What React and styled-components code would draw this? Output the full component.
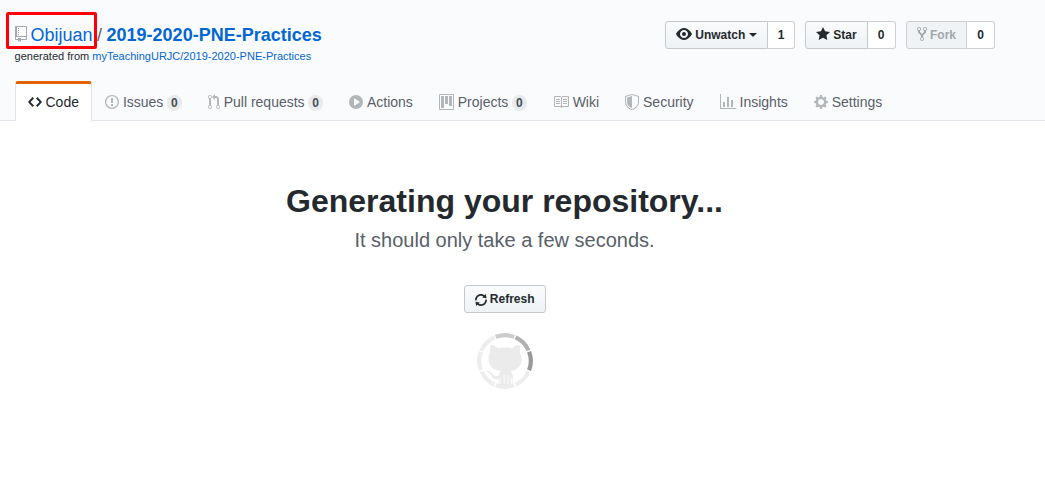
import React from "react";
import styled, { createGlobalStyle } from "styled-components";

const GlobalStyle = createGlobalStyle`
  * { box-sizing: border-box; }
  body {
    margin: 0;
    background: #fff;
    color: #24292e;
    font: 14px/1.5 "Liberation Sans", Arial, sans-serif;
  }
`;

const ICONS = {
  repo: [12, "M4 9H3V8h1v1zm0-3H3v1h1V6zm0-2H3v1h1V4zm0-2H3v1h1V2zm8-1v12c0 .55-.45 1-1 1H6v2l-1.5-1.5L3 16v-2H1c-.55 0-1-.45-1-1V1c0-.55.45-1 1-1h10c.55 0 1 .45 1 1zm-1 10H1v2h2v-1h3v1h5v-2zm0-10H2v9h9V1z"],
  eye: [16, "M8.06 2C3 2 0 8 0 8s3 6 8.06 6C13 14 16 8 16 8s-3-6-7.94-6zM8 12c-2.2 0-4-1.78-4-4 0-2.2 1.8-4 4-4 2.22 0 4 1.8 4 4 0 2.22-1.78 4-4 4zm2-4c0 1.11-.89 2-2 2-1.11 0-2-.89-2-2 0-1.11.89-2 2-2 1.11 0 2 .89 2 2z"],
  star: [14, "M14 6l-4.9-.64L7 1 4.9 5.36 0 6l3.6 3.26L2.67 14 7 11.67 11.33 14l-.93-4.74L14 6z"],
  fork: [10, "M8 1a1.993 1.993 0 0 0-1 3.72V6L5 8 3 6V4.72A1.993 1.993 0 0 0 2 1a1.993 1.993 0 0 0-1 3.72V6.5l3 3v1.78A1.993 1.993 0 0 0 5 15a1.993 1.993 0 0 0 1-3.72V9.5l3-3V4.72A1.993 1.993 0 0 0 8 1zM2 4.2C1.34 4.2.8 3.65.8 3c0-.65.55-1.2 1.2-1.2.65 0 1.2.55 1.2 1.2 0 .65-.55 1.2-1.2 1.2zm3 10c-.66 0-1.2-.55-1.2-1.2 0-.65.55-1.2 1.2-1.2.65 0 1.2.55 1.2 1.2 0 .65-.55 1.2-1.2 1.2zm3-10c-.66 0-1.2-.55-1.2-1.2 0-.65.55-1.2 1.2-1.2.65 0 1.2.55 1.2 1.2 0 .65-.55 1.2-1.2 1.2z"],
  code: [14, "M9.5 3L8 4.5 11.5 8 8 11.5 9.5 13 14 8 9.5 3zm-5 0L0 8l4.5 5L6 11.5 2.5 8 6 4.5 4.5 3z"],
  issue: [14, "M7 2.3c3.14 0 5.7 2.56 5.7 5.7s-2.56 5.7-5.7 5.7A5.71 5.71 0 0 1 1.3 8c0-3.14 2.56-5.7 5.7-5.7zM7 1C3.14 1 0 4.14 0 8s3.14 7 7 7 7-3.14 7-7-3.14-7-7-7zm1 3H6v5h2V4zm0 6H6v2h2v-2z"],
  pull: [12, "M11 11.28V5c-.03-.78-.34-1.47-.94-2.06C9.46 2.35 8.78 2.03 8 2H7V0L4 3l3 3V4h1c.27.02.48.11.69.31.21.2.3.42.31.69v6.28A1.993 1.993 0 0 0 10 15a1.993 1.993 0 0 0 1-3.72zm-1 2.92c-.66 0-1.2-.55-1.2-1.2 0-.65.55-1.2 1.2-1.2.65 0 1.2.55 1.2 1.2 0 .65-.55 1.2-1.2 1.2zM4 3c0-1.11-.89-2-2-2a1.993 1.993 0 0 0-1 3.72v6.56A1.993 1.993 0 0 0 2 15a1.993 1.993 0 0 0 1-3.72V4.72c.59-.34 1-.98 1-1.72zm-.8 10c0 .66-.55 1.2-1.2 1.2-.65 0-1.2-.55-1.2-1.2 0-.65.55-1.2 1.2-1.2.65 0 1.2.55 1.2 1.2zM2 4.2C1.34 4.2.8 3.65.8 3c0-.65.55-1.2 1.2-1.2.65 0 1.2.55 1.2 1.2 0 .65-.55 1.2-1.2 1.2z"],
  play: [14, "M14 8A7 7 0 1 1 0 8a7 7 0 0 1 14 0zm-8.223 3.482l4.599-3.066a.5.5 0 0 0 0-.832L5.777 4.518A.5.5 0 0 0 5 4.934v6.132a.5.5 0 0 0 .777.416z"],
  project: [15, "M10 12h3V2h-3v10zm-4-2h3V2H6v8zm-4 4h3V2H2v12zm-1 1h13V1H1v14zM14 0H1a1 1 0 0 0-1 1v14a1 1 0 0 0 1 1h13a1 1 0 0 0 1-1V1a1 1 0 0 0-1-1z"],
  book: [16, "M3 5h4v1H3V5zm0 3h4V7H3v1zm0 2h4V9H3v1zm11-5h-4v1h4V5zm0 2h-4v1h4V7zm0 2h-4v1h4V9zm2-6v9c0 .55-.45 1-1 1H9.5l-1 1-1-1H2c-.55 0-1-.45-1-1V3c0-.55.45-1 1-1h5.5l1 1 1-1H15c.55 0 1 .45 1 1zm-8 .5L7.5 3H2v9h6V3.5zm7-.5H9.5l-.5.5V12h6V3z"],
  shield: [14, "M0 2l7-2 7 2v6.02C14 12.69 8.69 16 7 16c-1.69 0-7-3.31-7-7.98V2zm1 .75L7 1l6 1.75v5.268C13 12.104 8.449 15 7 15c-1.449 0-6-2.896-6-6.982V2.75zm1 .75L7 2v12c-1.207 0-5-2.482-5-5.985V3.5z"],
  graph: [16, "M16 14v1H0V0h1v14h15zM5 13H3V8h2v5zm4 0H7V3h2v10zm4 0h-2V6h2v7z"],
  gear: [14, "M14 8.77v-1.6l-1.94-.64-.45-1.09.88-1.84-1.13-1.13-1.81.91-1.09-.45-.69-1.92h-1.6l-.63 1.94-1.11.45-1.84-.88-1.13 1.13.91 1.81-.45 1.09L0 7.23v1.59l1.94.64.45 1.09-.88 1.84 1.13 1.13 1.81-.91 1.09.45.69 1.92h1.59l.63-1.94 1.11-.45 1.84.88 1.13-1.13-.92-1.81.47-1.09L14 8.75v.02zM7 11c-1.66 0-3-1.34-3-3s1.34-3 3-3 3 1.34 3 3-1.34 3-3 3z"],
  sync: [12, "M10.24 7.4a4.15 4.15 0 0 1-1.2 3.6 4.346 4.346 0 0 1-5.41.54L4.8 10.4.5 9.8l.6 4.2 1.31-1.26c2.36 1.74 5.7 1.57 7.84-.54a5.876 5.876 0 0 0 1.74-4.46l-1.75-.34zM2.96 5a4.346 4.346 0 0 1 5.41-.54L7.2 5.6l4.3.6-.6-4.2-1.31 1.26c-2.36-1.74-5.7-1.57-7.85.54C.5 5.03-.06 6.65.01 8.26l1.75.35A4.17 4.17 0 0 1 2.96 5z"],
};

const IconSvg = styled.svg`
  display: inline-block;
  flex: none;
  fill: currentColor;
  vertical-align: text-top;
`;

function Icon({ name, className }) {
  const [width, d] = ICONS[name];
  return (
    <IconSvg className={className} width={width} height={16} viewBox={`0 0 ${width} 16`}>
      <path fillRule="evenodd" d={d} />
    </IconSvg>
  );
}

const Header = styled.header`
  height: 121px;
  padding: 21px 50px 0 15px;
  background: #fafbfc;
  border-bottom: 1px solid #e1e4e8;
`;

const HeaderTop = styled.div`
  display: flex;
  justify-content: space-between;
  align-items: flex-start;
  height: 60px;
`;

const RepoTitle = styled.h1`
  position: relative;
  margin: 0;
  padding-top: 1px;
  font-size: 18px;
  font-weight: 400;
  line-height: 27px;
  color: #586069;
  white-space: nowrap;
`;

const RepoIcon = styled(Icon)`
  margin: 1px 3.5px 0 0;
  color: #a3a8ad;
`;

const Link = styled.a`
  color: #0366d6;
  font-weight: ${(p) => (p.$bold ? 600 : 400)};
`;

const Slash = styled.span`
  margin: 0 4.5px;
`;

const Highlight = styled.span`
  position: absolute;
  left: -9.3px;
  top: -9px;
  width: 91px;
  height: 37px;
  border: 3px solid #ff0008;
  border-radius: 2px;
`;

const Origin = styled.div`
  margin: -1px 0 0 -0.4px;
  font-size: 11px;
  line-height: 16px;
`;

const Actions = styled.div`
  display: flex;
  gap: 10px;
`;

const ButtonGroup = styled.div`
  display: flex;
`;

const ButtonIcon = styled(Icon)`
  margin-bottom: ${(p) => (p.name === "sync" ? -2 : 2)}px;
`;

const Button = styled.button`
  display: flex;
  align-items: center;
  gap: ${(p) => p.$gap || 3.3}px;
  height: 28px;
  padding: 0 10px;
  border: 1px solid ${(p) => (p.$disabled ? "#cdcfd1" : "#c5c9cc")};
  border-radius: ${(p) => (p.$grouped ? "3px 0 0 3px" : "3px")};
  background: ${(p) => (p.$disabled ? "#eff3f6" : "linear-gradient(#fafbfc, #eff3f6 90%)")};
  color: ${(p) => (p.$disabled ? "#a3a7aa" : "#24292e")};
  font: 600 12px/20px "Liberation Sans", Arial, sans-serif;
`;

const RefreshButton = styled(Button)`
  width: 82px;
`;

const Caret = styled.span`
  margin-left: 1px;
  border: 4px solid transparent;
  border-top-color: currentColor;
  border-bottom: 0;
`;

const Count = styled.span`
  width: ${(p) => p.$width || 28}px;
  height: 28px;
  border: 1px solid #cdcfd1;
  border-left: 0;
  border-radius: 0 3px 3px 0;
  background: #fff;
  font-size: 12px;
  font-weight: 600;
  line-height: 26px;
  text-align: center;
`;

const Nav = styled.nav`
  display: flex;
`;

const Tab = styled.a`
  display: flex;
  align-items: center;
  height: 40px;
  padding: 0 12px;
  border: 1px solid transparent;
  border-top-width: 3px;
  border-bottom: 0;
  border-radius: 3px 3px 0 0;
  color: #586069;
  white-space: nowrap;
  ${(p) =>
    p.$active &&
    `
    background: #fff;
    border-color: #e36209 #e1e4e8 transparent;
    color: #24292e;
  `}
`;

const TabIcon = styled(Icon)`
  margin: 0 ${(p) => (p.$active ? 3.5 : 3.95)}px 1px 0;
  color: ${(p) => (p.$active ? "inherit" : "#b3b6b9")};
`;

const Counter = styled.span`
  margin-left: 3.4px;
  padding: 2px 4.15px;
  border-radius: 20px;
  background: #e8eaec;
  color: #444d56;
  font-size: 12px;
  font-weight: 600;
  line-height: 12px;
`;

const Main = styled.main`
  display: flex;
  flex-direction: column;
  align-items: center;
  padding: 56px 50px 0 14px;
`;

const Heading = styled.h2`
  margin: 0;
  font-size: 32px;
  font-weight: 600;
  line-height: 48px;
`;

const Lead = styled.p`
  margin: 0 0 30px;
  color: #586069;
  font-size: 20px;
  line-height: 30px;
`;

const Spinner = styled.svg`
  margin: 16px 0 0 1px;
`;

const SEGMENTS = ["#cccccc", "#b0b0b0", "#999999", "#ededed", "#ededed", "#ededed", "#ededed", "#ededed"];

function segmentPath(index) {
  const start = ((-111 + index * 45) * Math.PI) / 180;
  const end = start + (42 * Math.PI) / 180;
  const point = (a) => `${32 + 25.8 * Math.cos(a)} ${32 + 25.8 * Math.sin(a)}`;
  return `M${point(start)}A25.8 25.8 0 0 1 ${point(end)}`;
}

function OctocatSpinner() {
  return (
    <Spinner width="64" height="64" viewBox="0 0 64 64">
      {SEGMENTS.map((color, i) => (
        <path key={i} d={segmentPath(i)} fill="none" stroke={color} strokeWidth="4.2" />
      ))}
      <path
        fill="#ebebeb"
        d="M17.6 16c2.8 0 5.8 1.6 7.6 3.2 4.4-1 9.2-1 13.6 0 1.8-1.6 4.8-3.2 7.6-3.2 1 2.6.9 4.900.2 7.100 1.300 1.700 1.900 4 1.900 6.700 0 7.500-3.900 11.500-11.200 12.300 1.700 1.600 2.400 3.400 2.400 5.600V56H25.800v-5.600c-3.700.3-5.500-.7-6.900-3-1.200-2-2.200-3.700-4.500-4.500-.8-.8.2-1.300 1.500-.9 3.200 1 3.700 4.900 6.900 5.100 1.500.1 2.300-.2 3.200-.8.2-1.600.7-3 2-4.200-8.100-.9-12.500-4.800-12.500-12.300 0-2.700.6-5 1.900-6.700-.7-2.200-.8-4.500.2-7.100z"
      />
      <path
        d="M27.2 49v6M31.1 46v9M35.1 46v9M38.6 49v6"
        fill="none"
        stroke="#fff"
        strokeWidth=".9"
      />
    </Spinner>
  );
}

const TABS = [
  { label: "Code", icon: "code", active: true },
  { label: "Issues", icon: "issue", count: 0 },
  { label: "Pull requests", icon: "pull", count: 0 },
  { label: "Actions", icon: "play" },
  { label: "Projects", icon: "project", count: 0 },
  { label: "Wiki", icon: "book" },
  { label: "Security", icon: "shield" },
  { label: "Insights", icon: "graph" },
  { label: "Settings", icon: "gear" },
];

function TabItem({ label, icon, count, active }) {
  return (
    <Tab $active={active}>
      <TabIcon name={icon} $active={active} />
      {label}
      {count !== undefined && <Counter>{count}</Counter>}
    </Tab>
  );
}

export default function App() {
  return (
    <>
      <GlobalStyle />
      <Header>
        <HeaderTop>
          <div>
            <RepoTitle>
              <RepoIcon name="repo" />
              <Link>Obijuan</Link>
              <Slash>/</Slash>
              <Link $bold>2019-2020-PNE-Practices</Link>
              <Highlight />
            </RepoTitle>
            <Origin>
              generated from <Link>myTeachingURJC/2019-2020-PNE-Practices</Link>
            </Origin>
          </div>
          <Actions>
            <ButtonGroup>
              <Button $grouped $gap={2.8}>
                <ButtonIcon name="eye" />
                Unwatch
                <Caret />
              </Button>
              <Count $width={27}>1</Count>
            </ButtonGroup>
            <ButtonGroup>
              <Button $grouped>
                <ButtonIcon name="star" />
                Star
              </Button>
              <Count>0</Count>
            </ButtonGroup>
            <ButtonGroup>
              <Button $grouped $disabled>
                <ButtonIcon name="fork" />
                Fork
              </Button>
              <Count>0</Count>
            </ButtonGroup>
          </Actions>
        </HeaderTop>
        <Nav>
          {TABS.map((tab) => (
            <TabItem key={tab.label} {...tab} />
          ))}
        </Nav>
      </Header>
      <Main>
        <Heading>Generating your repository...</Heading>
        <Lead>It should only take a few seconds.</Lead>
        <RefreshButton>
          <ButtonIcon name="sync" />
          Refresh
        </RefreshButton>
        <OctocatSpinner />
      </Main>
    </>
  );
}
